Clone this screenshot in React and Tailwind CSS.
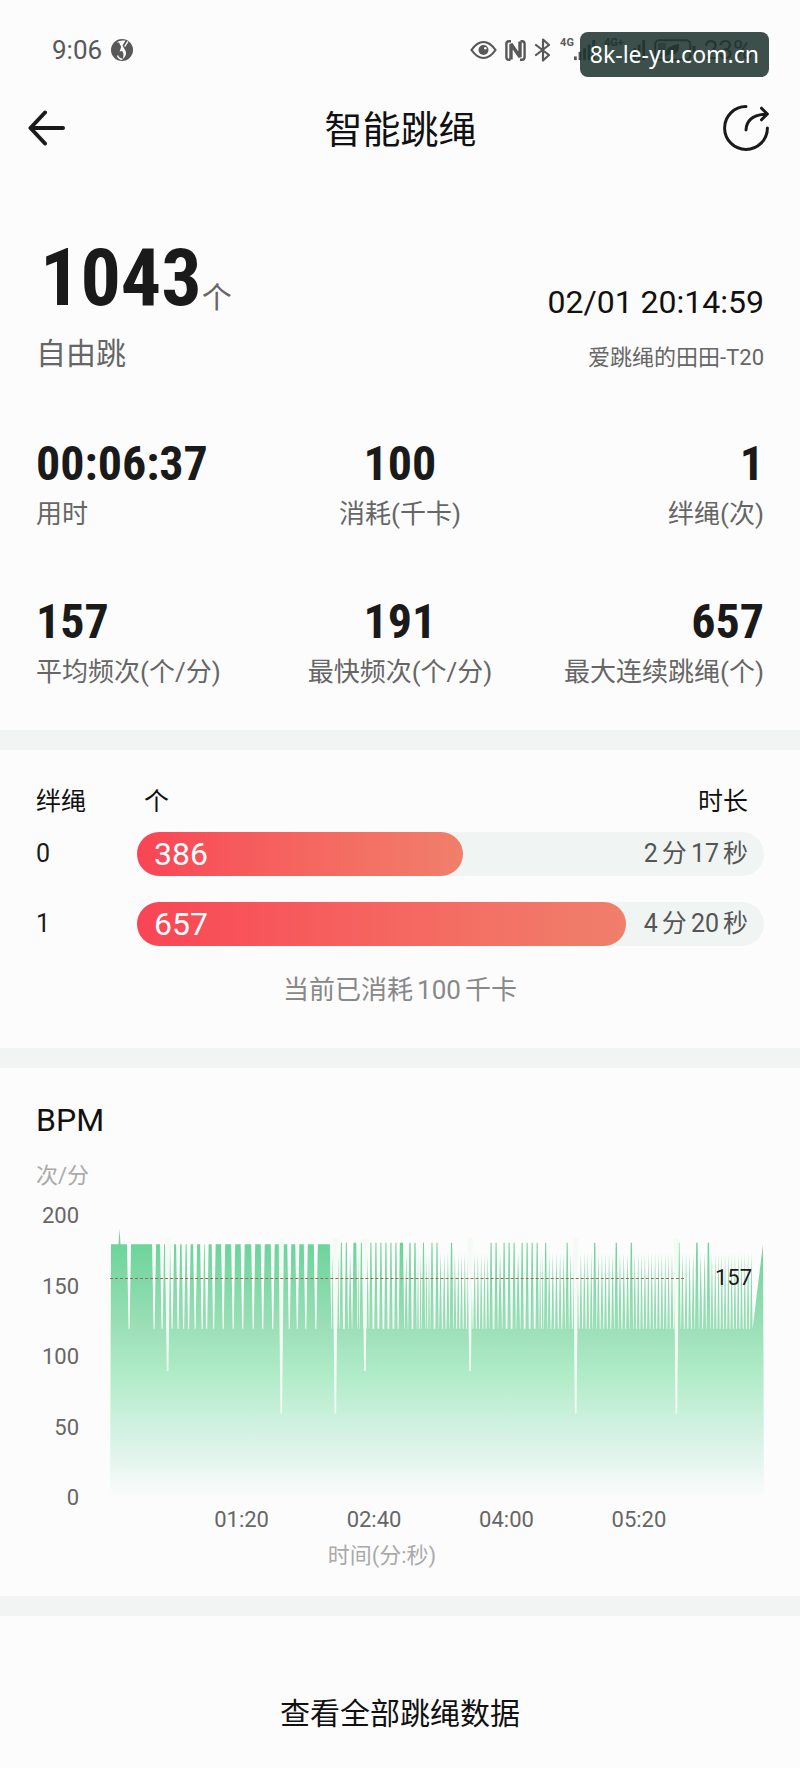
const STATS = [
  { value: '00:06:37', label: '用时', align: 'text-left' },
  { value: '100', label: '消耗(千卡)', align: 'text-center' },
  { value: '1', label: '绊绳(次)', align: 'text-right' },
  { value: '157', label: '平均频次(个/分)', align: 'text-left' },
  { value: '191', label: '最快频次(个/分)', align: 'text-center' },
  { value: '657', label: '最大连续跳绳(个)', align: 'text-right' },
];

const ROUNDS = [
  { trip: 0, count: 386, minutes: 2, seconds: 17, percent: 52 },
  { trip: 1, count: 657, minutes: 4, seconds: 20, percent: 78 },
];

const Y_TICKS = [200, 150, 100, 50, 0];
const X_TICKS = ['01:20', '02:40', '04:00', '05:20'];

// Chart units: x runs 0-653, y is 1.41 per bpm counted down from 200
const CHART_WIDTH = 653;
const CHART_HEIGHT = 282;
const toY = (bpm) => (200 - bpm) * 1.41;

// Short drops to 120 in the steady first part
const DROPS = [19, 44, 52, 57, 62, 68, 73.5, 78.5, 85, 92, 96.5, 103.5, 113, 123, 132.5, 143, 152.5, 162.5, 171, 179, 187, 195.5, 205.5];

// Peaks of the second part: [x, half width of the top]
const PEAKS = [
  [231, 0.5], [236, 0.5], [244.5, 1.4], [251, 0.5], [260.5, 0.5], [265.5, 0.5], [270.5, 0.5],
  [275.5, 0.5], [280.5, 0.5], [285.5, 0.5], [291, 1.6], [299.5, 0.6], [304.5, 0.6], [313, 0.5],
  [321.5, 0.5], [326.5, 0.5], [341, 0.6], [380.5, 0.5], [385.5, 0.5], [393.5, 0.5], [398.5, 0.5],
  [403.5, 0.5], [411.5, 0.5], [416.5, 0.5], [421.5, 0.5], [426.5, 0.5], [435, 0.5], [456.5, 0.5],
  [484, 0.6], [505.5, 0.6], [520.5, 0.6], [568, 0.6], [586, 0.7], [597.5, 0.7],
];

const DIPS = [
  { x: 57.5, bpm: 90 },
  { x: 171, bpm: 60 },
  { x: 225, bpm: 60 },
  { x: 254.5, bpm: 90 },
  { x: 359.5, bpm: 90 },
  { x: 465, bpm: 60 },
  { x: 565.5, bpm: 60 },
];

const buildArea = () => {
  const points = [[0, 0], [1, 180], [8.5, 180], [9.5, 191], [10.5, 180]];
  DROPS.forEach(x => points.push([x - 2, 180], [x - 0.5, 120], [x + 0.5, 120], [x + 2, 180]));
  points.push([219.5, 180], [221, 120]);

  let last = 221;
  const fillTo = (end) => {
    const steps = Math.max(1, Math.round((end - last) / 3.3));
    const step = (end - last) / steps;
    for (let i = 0; i < steps; i++) {
      const left = last + step * i;
      points.push([left + 0.4, 120], [left + step / 2, 174], [left + step - 0.4, 120]);
    }
  };
  PEAKS.forEach(([x, half]) => {
    const left = x - half - 1.2;
    if (left - last > 2) fillTo(left);
    points.push([left, 120], [x - half, 181], [x + half, 181], [x + half + 1.2, 120]);
    last = x + half + 1.2;
  });
  fillTo(642);
  points.push([652, 180], [653, 0]);
  return points.map(([x, bpm]) => `${x.toFixed(1)},${toY(bpm).toFixed(1)}`).join(' ');
};

const AREA = buildArea();

const AppBadgeIcon = () => (
  <svg viewBox="0 0 22 22" className="size-[22px]">
    <circle cx="11" cy="11" r="11" fill="#585858" />
    <path d="M5.5 3.2 Q9.5 .8 14.5 1.6 L11.5 6.5 L14.6 12 Q16.4 16.5 11.5 20.4 Q13.6 15.5 11.2 12 L8.6 12.6 L10.2 8 L8 3.6Z" fill="#fcfcfc" />
    <path d="M17 2.4 L13.6 7.6" stroke="#fcfcfc" strokeWidth="1.3" />
    <path d="M6.5 16.5 Q7.5 20 11.5 20.4" stroke="#fcfcfc" strokeWidth="1.4" fill="none" />
  </svg>
);

const EyeIcon = () => (
  <svg viewBox="0 0 27 20" className="h-5 w-[27px]" fill="none">
    <path d="M1.5 10 Q7 2 13.5 2 T25.5 10 Q20 18 13.5 18 T1.5 10Z" stroke="#585858" strokeWidth="2.2" />
    <circle cx="13.5" cy="10" r="5" fill="#585858" />
    <circle cx="15.3" cy="8.3" r="1.3" fill="#fcfcfc" />
  </svg>
);

const NfcIcon = () => (
  <svg viewBox="0 0 21 21" className="size-[21px]" fill="none" stroke="#585858">
    <path d="M5.5 19.8 H4 Q1.4 19.8 1.4 17 V4 Q1.4 1.2 4 1.2 H6" strokeWidth="2.4" />
    <path d="M15.5 1.2 H17 Q19.6 1.2 19.6 4 V17 Q19.6 19.8 17 19.8 H15" strokeWidth="2.4" />
    <path d="M6 19.5 V4 L15 17 V1.5" strokeWidth="3.4" strokeLinejoin="bevel" />
  </svg>
);

const BluetoothIcon = () => (
  <svg viewBox="0 0 18 24" className="h-6 w-[18px]" fill="none" stroke="#585858" strokeWidth="2.2" strokeLinejoin="round" strokeLinecap="round">
    <path d="M2 7 L15 17 L9 22.5 V1.5 L15 7 L2 17" />
  </svg>
);

const SignalIcon = ({ label }) => (
  <div className="flex items-center">
    <span className="-mt-2 self-start text-[11px] leading-6 font-bold">{label}</span>
    <svg viewBox="0 0 24 22" className="h-[22px] w-[22px]" fill="#585858">
      <rect x="0" y="18" width="3" height="4" />
      <rect x="5" y="13" width="3" height="9" />
      <rect x="10" y="9" width="3" height="13" />
      <rect x="15" y="5" width="3" height="17" />
      <rect x="20" y="0" width="3" height="22" />
    </svg>
  </div>
);

const BatteryIcon = () => (
  <svg viewBox="0 0 42 22" className="h-[22px] w-[42px]" fill="none">
    <rect x="1.2" y="1.2" width="35" height="19.6" rx="4" stroke="#585858" strokeWidth="2" />
    <path d="M40 7 V15" stroke="#585858" strokeWidth="3" />
    <rect x="4" y="4" width="8" height="14" rx="1" fill="#9a9a9a" />
    <path d="M12 17 Q10 7 25 5 Q26 17 15 15.5 L12 17Z" fill="#585858" />
  </svg>
);

const StatusBar = () => (
  <div className="relative flex h-[100px] items-center justify-between pl-[52px] pr-12 text-[26px] leading-8 text-[#585858]">
    <div className="flex items-center gap-[9px]">
      <span>9:06</span>
      <AppBadgeIcon />
    </div>
    <div className="flex items-center gap-2">
      <EyeIcon />
      <NfcIcon />
      <BluetoothIcon />
      <SignalIcon label="4G" />
      <SignalIcon label="4G+" />
      <BatteryIcon />
      <span>23%</span>
    </div>
    <div className="absolute right-[31px] top-8 rounded-lg bg-[#1a302b]/85 px-[10px] font-['Noto_Sans'] text-[23px] leading-[45px] text-white">
      8k-le-yu.com.cn
    </div>
  </div>
);

const Header = () => (
  <header className="flex h-14 items-center justify-between pl-7 pr-[31px]">
    <button aria-label="返回" className="w-[50px]">
      <svg viewBox="0 0 38 36" className="h-9 w-[38px]" fill="none" stroke="#1a1a1a" strokeWidth="4" strokeLinecap="round" strokeLinejoin="round">
        <path d="M17 2.5 L2.5 18 L17 33.5 M2.5 18 H35" />
      </svg>
    </button>
    <h1 className="pt-1 text-[38px] leading-14 text-[#111]">智能跳绳</h1>
    <button aria-label="分享">
      <svg viewBox="0 0 46 46" className="size-[46px]" fill="none" stroke="#1a1a1a" strokeWidth="3" strokeLinecap="round" strokeLinejoin="round">
        <path d="M23 1.6 A21.4 21.4 0 1 0 44.4 23" />
        <path d="M23 25 Q23.5 10 44 9 M38.5 3.2 L44.4 9 L38.5 14.8" />
      </svg>
    </button>
  </header>
);

const Divider = () => <div className="h-5 bg-[#f2f4f3]" />;

const RoundRow = ({ round }) => (
  <div className="flex items-center text-[25px] leading-10">
    <span className="w-[101px] text-[#1a1a1a]">{round.trip}</span>
    <div className="relative h-11 flex-1 rounded-full bg-[#f0f5f3]">
      <div
        className="flex h-11 items-center rounded-full bg-linear-to-r from-[#f94455] to-[#f07f6b] pl-[17px] text-[32px] text-white"
        style={{ width: `${round.percent}%` }}
      >
        {round.count}
      </div>
      <div className="absolute right-4 top-0 flex h-11 items-center gap-1 text-[#555]">
        <span>{round.minutes}</span>
        <span>分</span>
        <span>{round.seconds}</span>
        <span>秒</span>
      </div>
    </div>
  </div>
);

const BpmChart = () => (
  <div className="relative">
    <svg viewBox={`0 0 ${CHART_WIDTH} ${CHART_HEIGHT}`} preserveAspectRatio="none" className="block h-[282px] w-full">
      <defs>
        <linearGradient id="bpm" gradientUnits="userSpaceOnUse" x1="0" y1="28" x2="0" y2="282">
          <stop offset="0" stopColor="#6cd49a" />
          <stop offset="0.33" stopColor="#9cdfb8" />
          <stop offset="0.5" stopColor="#aeebc6" />
          <stop offset="0.7" stopColor="#cdf1de" />
          <stop offset="0.85" stopColor="#e4f5ee" />
          <stop offset="1" stopColor="#fcfcfc" />
        </linearGradient>
      </defs>
      <polygon points={AREA} fill="url(#bpm)" />
      {DIPS.map(dip => (
        <polygon
          key={dip.x}
          points={`${dip.x - 2.6},${toY(184)} ${dip.x + 2.6},${toY(184)} ${dip.x + 0.8},${toY(dip.bpm)} ${dip.x - 0.8},${toY(dip.bpm)}`}
          fill="#f4fbf5"
        />
      ))}
      <line x1="0" x2="574" y1="62.5" y2="62.5" stroke="#a0655a" strokeWidth="1" strokeDasharray="3 2" />
    </svg>
    <span className="absolute right-3 top-[46px] text-[22px] leading-8 text-[#1a1a1a]">157</span>
  </div>
);

export default function App() {
  return (
    <div className="min-h-screen bg-[#fcfcfc] font-[Roboto,'Noto_Sans_CJK_SC',sans-serif]">
      <StatusBar />
      <Header />

      <section className="px-9 pb-[38px] pt-[82px]">
        <div className="flex items-end justify-between">
          <div>
            <div className="flex items-end pl-1">
              <span className="font-['Roboto_Condensed','Open_Sans_Condensed','Noto_Sans_Condensed',Roboto,sans-serif] text-[80px] leading-20 font-bold text-[#1a1a1a]">1043</span>
              <span className="text-[30px] leading-10 text-[#666]">个</span>
            </div>
            <div className="mt-4 text-[30px] leading-10 text-[#666]">自由跳</div>
          </div>
          <div className="text-right">
            <div className="text-[32px] leading-10 text-[#111]">02/01 20:14:59</div>
            <div className="mt-5 text-[22px] leading-8 text-[#666]">爱跳绳的田田-T20</div>
          </div>
        </div>

        <div className="mt-15 grid grid-cols-3 gap-y-[58px]">
          {STATS.map(stat => (
            <div key={stat.label} className={stat.align}>
              <div className="font-['Roboto_Condensed','Open_Sans_Condensed','Noto_Sans_Condensed',Roboto,sans-serif] text-[48px] leading-15 font-bold text-[#1a1a1a]">{stat.value}</div>
              <div className="text-[26px] leading-10 text-[#666]">{stat.label}</div>
            </div>
          ))}
        </div>
      </section>

      <Divider />

      <section className="px-9 pb-[38px] pt-8">
        <div className="flex pr-4 text-[25px] leading-10 text-[#111]">
          <span className="w-[108px]">绊绳</span>
          <span className="flex-1">个</span>
          <span>时长</span>
        </div>
        <div className="mt-[10px] space-y-[26px]">
          {ROUNDS.map(round => (
            <RoundRow key={round.trip} round={round} />
          ))}
        </div>
        <div className="mt-6 flex justify-center gap-1 text-[26px] leading-10 text-[#888]">
          <span>当前已消耗</span>
          <span>100</span>
          <span>千卡</span>
        </div>
      </section>

      <Divider />

      <section className="px-9 pb-6 pt-8">
        <h2 className="text-[32px] leading-10 text-[#111]">BPM</h2>
        <div className="mt-5 text-[22px] leading-8 text-[#aaa]">次/分</div>
        <div className="mt-2 flex items-start">
          <div className="flex h-[314px] w-[43px] flex-col justify-between text-right text-[22px] leading-8 text-[#666]">
            {Y_TICKS.map(tick => (
              <span key={tick}>{tick}</span>
            ))}
          </div>
          <div className="ml-[31px] flex-1 pt-4">
            <BpmChart />
            <div className="mt-[6px] grid grid-cols-4 pl-[10%] pr-[9%] text-center text-[22px] leading-8 text-[#666]">
              {X_TICKS.map(tick => (
                <span key={tick}>{tick}</span>
              ))}
            </div>
          </div>
        </div>
        <div className="mt-1 pr-9 text-center text-[22px] leading-8 text-[#aaa]">时间(分:秒)</div>
      </section>

      <Divider />

      <div className="pb-8 pt-[78px] text-center">
        <button className="text-[30px] leading-10 text-[#111]">查看全部跳绳数据</button>
      </div>
    </div>
  );
}
